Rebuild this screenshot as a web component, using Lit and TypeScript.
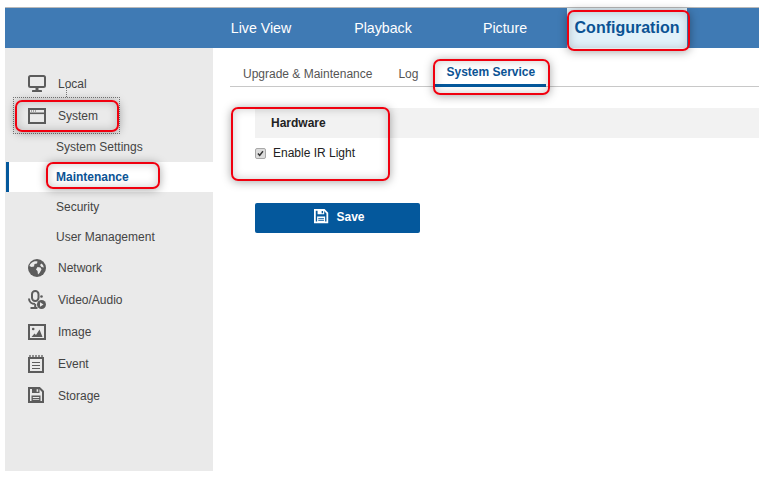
import { LitElement, html, css, svg } from "lit";
import { customElement } from "lit/decorators.js";

const icons: Record<string, unknown> = {
  monitor: svg`<svg viewBox="0 0 18 18" class="ic"><rect x="1" y="1" width="16" height="11" rx="1.500" fill="none" stroke="currentColor" stroke-width="2"/><rect x="7.500" y="12" width="3" height="3" fill="currentColor"/><rect x="4" y="15" width="10" height="2" rx=".6" fill="currentColor"/></svg>`,
  window: svg`<svg viewBox="0 0 18 18" class="ic"><rect x="1" y="2" width="16" height="14" fill="none" stroke="currentColor" stroke-width="2"/><rect x="1" y="5.500" width="16" height="1.600" fill="currentColor"/><path d="M3 4h1M5 4h1M7 4h1" stroke="currentColor" stroke-width="1"/></svg>`,
  globe: svg`<svg viewBox="0 0 18 18" class="ic"><circle cx="9" cy="9" r="9" fill="currentColor"/><path d="M4 3.500c2-1.500 4-1.500 5.500-1l-.5 2-2.500.5-.5 2.500-2.500.5-2-1c.3-1.500 1.200-2.700 2.500-3.500zM9.500 8l3 .5 1 2-2 3.500-1.500 1.500-.5-3.500-1.500-1.500zM13.500 4.500l1.500 1.500.8 2.500-2.300-.5-1.500-2z" fill="#eaeaea"/></svg>`,
  mic: svg`<svg viewBox="0 0 18 20" class="ic tall"><rect x="4" y="1" width="6.500" height="10" rx="3.200" fill="none" stroke="currentColor" stroke-width="2"/><path d="M1 8.500c0 3.500 2.700 5.500 6.200 5.500M7.200 14v3M2.500 18h7" fill="none" stroke="currentColor" stroke-width="2"/><circle cx="13.500" cy="6.500" r="1.300" fill="currentColor"/><circle cx="13.500" cy="14.500" r="4.500" fill="currentColor"/><path d="M12 12.300v4.400l3.500-2.200z" fill="#eaeaea"/></svg>`,
  image: svg`<svg viewBox="0 0 18 16" class="ic"><rect x="1" y="1" width="16" height="14" fill="none" stroke="currentColor" stroke-width="2"/><circle cx="5.200" cy="5" r="1.300" fill="currentColor"/><path d="M3.500 13l3-3.500 1.500 1.500 3.500-5.500 3 7.500z" fill="currentColor"/></svg>`,
  event: svg`<svg viewBox="0 0 18 18" class="ic"><rect x="1" y="3" width="14" height="14" fill="none" stroke="currentColor" stroke-width="2"/><path d="M2 0v3M5 0v3M8 0v3M11 0v3M14 0v3" stroke="currentColor" stroke-width="1.300"/><path d="M4 7.500h8M4 10.500h8M4 13.500h8" stroke="currentColor" stroke-width="1.200"/></svg>`,
  save: svg`<svg viewBox="0 0 18 18" class="ic"><path d="M1 1h10.500L15 4.500V15H1z" fill="none" stroke="currentColor" stroke-width="2"/><path fill="currentColor" d="M4 1h7.500v5H4zM3.500 8.500h9V15h-9z"/><path fill="var(--hole)" d="M8.600 2.200h1.600v2.600H8.600zM4.800 10h6.400v.9H4.800zM4.800 12.200h6.400v.9H4.800z"/></svg>`,
};

const mainMenuTop = [
  { t: "Local", i: "monitor" },
  { t: "System", i: "window" },
];
const subMenu = ["System Settings", "Maintenance", "Security", "User Management"];
const mainMenuBottom = [
  { t: "Network", i: "globe" },
  { t: "Video/Audio", i: "mic" },
  { t: "Image", i: "image" },
  { t: "Event", i: "event" },
  { t: "Storage", i: "save" },
];

@customElement("app-root")
export class AppRoot extends LitElement {
  static styles = css`
    :host {
      display: block;
      position: relative;
      width: 767px;
      height: 477px;
      overflow: hidden;
      background: #fff;
      font-family: "Liberation Sans", Arial, sans-serif;
    }
    .frame {
      display: flex;
      flex-direction: column;
      height: 471px;
      box-sizing: border-box;
      padding: 7px 8px 0 5px;
    }
    .nav {
      display: flex;
      gap: 2px;
      height: 41px;
      box-sizing: border-box;
      flex: none;
      padding-left: 196px;
      background: #3f7ab4;
      border-top: 1px solid #b9b9b9;
    }
    .nav div {
      width: 120px;
      line-height: 40px;
      text-align: center;
      color: #fff;
      font-size: 14.2px;
    }
    .nav .on {
      background: #e1f1f9;
      color: #0b5394;
      font-weight: 700;
      font-size: 16px;
      line-height: 39px;
    }
    .body {
      flex: 1;
      display: flex;
      min-height: 0;
    }
    .side {
      width: 208px;
      flex: none;
      padding-top: 20px;
      background: #eaeaea;
      font-size: 12px;
      color: #444;
      --hole: #eaeaea;
    }
    .row {
      display: flex;
      align-items: center;
      height: 32px;
      padding-left: 22px;
      gap: 12px;
    }
    .ic-box {
      width: 19px;
      display: flex;
      justify-content: center;
      color: #5c5c5c;
    }
    .ic {
      width: 18px;
      height: 18px;
      display: block;
    }
    .ic.tall {
      height: 20px;
    }
    .sub {
      height: 30px;
      line-height: 30px;
      padding-left: 51px;
    }
    .sub.on {
      margin-left: 1px;
      padding-left: 47px;
      background: #fff;
      border-left: 3px solid #04589c;
      color: #0b5394;
      font-weight: 700;
    }
    .main {
      flex: 1;
      min-width: 0;
      padding-left: 17px;
      color: #333;
    }
    .tabs {
      display: flex;
      height: 39px;
      box-sizing: border-box;
      border-bottom: 1px solid #c8c8c8;
      font-size: 12px;
      color: #555;
    }
    .tab {
      padding: 19px 13px 0;
    }
    .tab.on {
      margin: 0 0 -1px 2px;
      padding: 17px 11px 0 13px;
      border-bottom: 3px solid #04589c;
      color: #0b5394;
      font-weight: 700;
    }
    .content {
      padding: 21px 0 0 25px;
    }
    .head {
      height: 30px;
      line-height: 30px;
      padding-left: 16px;
      background: #f2f2f2;
      font-size: 12px;
      font-weight: 700;
      color: #222;
    }
    .check {
      display: flex;
      align-items: center;
      gap: 7px;
      height: 30px;
      font-size: 12px;
      color: #222;
    }
    .box {
      width: 11px;
      height: 11px;
      box-sizing: border-box;
      border: 1px solid #a8a8a8;
      border-radius: 2px;
      background: #dcdcdc;
      display: block;
    }
    .save {
      display: flex;
      align-items: center;
      justify-content: center;
      gap: 6px;
      width: 165px;
      height: 30px;
      box-sizing: border-box;
      padding: 0 0 3px 4px;
      margin-top: 35px;
      border-radius: 2px;
      background: #04589c;
      color: #fff;
      font-size: 12px;
      font-weight: 700;
      --hole: #04589c;
    }
    .save .ic {
      width: 16px;
      height: 16px;
      margin-top: 1px;
    }
    .mark {
      position: absolute;
      box-sizing: border-box;
      border: 2px solid #f0000f;
      border-radius: 7px;
      box-shadow: 0 1px 10px rgba(0, 0, 0, 0.35), inset 0 0 10px rgba(0, 0, 0, 0.2);
    }
    .m-config { left: 567px; top: 10px; width: 123px; height: 41px; }
    .m-service { left: 433px; top: 59px; width: 117px; height: 36px; }
    .m-hardware { left: 231px; top: 107px; width: 159px; height: 74px; }
    .m-system { left: 15px; top: 100px; width: 104px; height: 32px; }
    .m-maint { left: 46px; top: 162px; width: 114px; height: 27px; }
    .dash {
      position: absolute;
      left: 13px;
      top: 97px;
      width: 107px;
      height: 37px;
      box-sizing: border-box;
      border: 1px dotted #777;
    }
    .dash-line {
      position: absolute;
      left: 66px;
      top: 87px;
      height: 10px;
      border-left: 1px dotted #777;
    }
  `;

  private row(m: { t: string; i: string }) {
    return html`<div class="row"><span class="ic-box">${icons[m.i]}</span><span>${m.t}</span></div>`;
  }

  render() {
    return html`
      <div class="frame">
        <div class="nav">
          <div>Live View</div>
          <div>Playback</div>
          <div>Picture</div>
          <div class="on">Configuration</div>
        </div>
        <div class="body">
          <div class="side">
            ${mainMenuTop.map((m) => this.row(m))}
            ${subMenu.map((s) => html`<div class="sub ${s === "Maintenance" ? "on" : ""}">${s}</div>`)}
            ${mainMenuBottom.map((m) => this.row(m))}
          </div>
          <div class="main">
            <div class="tabs">
              <div class="tab">Upgrade &amp; Maintenance</div>
              <div class="tab">Log</div>
              <div class="tab on">System Service</div>
            </div>
            <div class="content">
              <div class="head">Hardware</div>
              <div class="check">
                <svg class="box" viewBox="0 0 11 11"><path d="M2.300 5.500l2.200 2.300 4-5" fill="none" stroke="#333" stroke-width="1.800"/></svg>
                <span>Enable IR Light</span>
              </div>
              <div class="save">${icons.save}<span>Save</span></div>
            </div>
          </div>
        </div>
      </div>
      <div class="dash"></div>
      <div class="dash-line"></div>
      <div class="mark m-config"></div>
      <div class="mark m-service"></div>
      <div class="mark m-hardware"></div>
      <div class="mark m-system"></div>
      <div class="mark m-maint"></div>
    `;
  }
}
